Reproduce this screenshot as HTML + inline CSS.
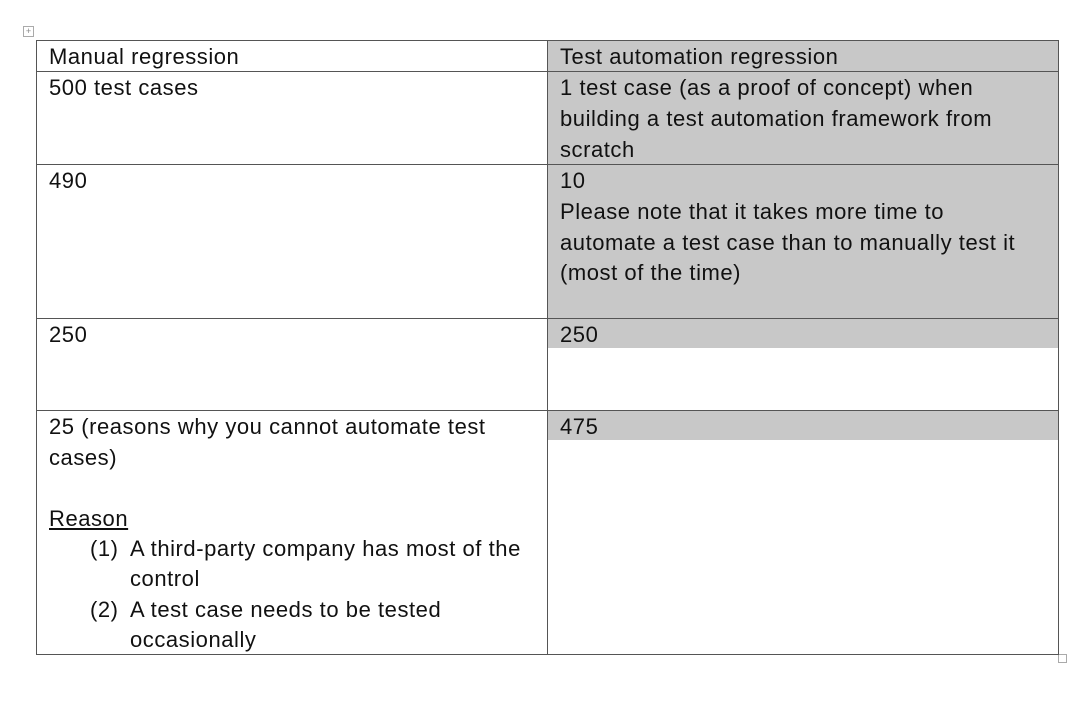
<!DOCTYPE html>
<html><head><meta charset="utf-8"><style>
body{margin:0;width:1086px;height:701px;background:#fff;position:relative;overflow:hidden;font-family:"Liberation Sans",Arial,sans-serif;font-size:22px;letter-spacing:0.55px;color:#111}
.g{position:absolute;background:#c8c8c8}
.h{position:absolute;background:#555;height:1px}
.v{position:absolute;background:#555;width:1px}
.t{position:absolute;height:30px;line-height:30px;white-space:nowrap}
</style></head><body>
<div style="position:absolute;left:23px;top:26px;width:9px;height:9px;border:1px solid #aaa;font-size:9px;line-height:9px;letter-spacing:0;text-align:center;color:#888">+</div>
<div style="position:absolute;left:1058px;top:654px;width:7px;height:7px;border:1px solid #aaa"></div>
<div class="g" style="left:547px;top:40px;width:511px;height:278px"></div>
<div class="g" style="left:547px;top:318px;width:511px;height:30px"></div>
<div class="g" style="left:547px;top:410px;width:511px;height:30px"></div>
<div class="h" style="left:36px;top:40px;width:1023px"></div>
<div class="h" style="left:36px;top:71px;width:1023px"></div>
<div class="h" style="left:36px;top:164px;width:1023px"></div>
<div class="h" style="left:36px;top:318px;width:1023px"></div>
<div class="h" style="left:36px;top:410px;width:1023px"></div>
<div class="h" style="left:36px;top:654px;width:1023px"></div>
<div class="v" style="left:36px;top:40px;height:615px"></div>
<div class="v" style="left:547px;top:40px;height:615px"></div>
<div class="v" style="left:1058px;top:40px;height:615px"></div>

<div class="t" style="left:49px;top:42px">Manual regression</div>
<div class="t" style="left:560px;top:42px">Test automation regression</div>
<div class="t" style="left:49px;top:73px">500 test cases</div>
<div class="t" style="left:560px;top:73px">1 test case (as a proof of concept) when</div>
<div class="t" style="left:560px;top:104px">building a test automation framework from</div>
<div class="t" style="left:560px;top:135px">scratch</div>
<div class="t" style="left:49px;top:166px">490</div>
<div class="t" style="left:560px;top:166px">10</div>
<div class="t" style="left:560px;top:197px">Please note that it takes more time to</div>
<div class="t" style="left:560px;top:228px">automate a test case than to manually test it</div>
<div class="t" style="left:560px;top:258px">(most of the time)</div>
<div class="t" style="left:49px;top:320px">250</div>
<div class="t" style="left:560px;top:320px">250</div>
<div class="t" style="left:49px;top:412px">25 (reasons why you cannot automate test</div>
<div class="t" style="left:560px;top:412px">475</div>
<div class="t" style="left:49px;top:443px">cases)</div>
<div class="t" style="left:49px;top:504px;text-decoration:underline">Reason</div>
<div class="t" style="left:90px;top:534px">(1)</div>
<div class="t" style="left:130px;top:534px">A third-party company has most of the</div>
<div class="t" style="left:130px;top:564px">control</div>
<div class="t" style="left:90px;top:595px">(2)</div>
<div class="t" style="left:130px;top:595px">A test case needs to be tested</div>
<div class="t" style="left:130px;top:625px">occasionally</div>
</body></html>
